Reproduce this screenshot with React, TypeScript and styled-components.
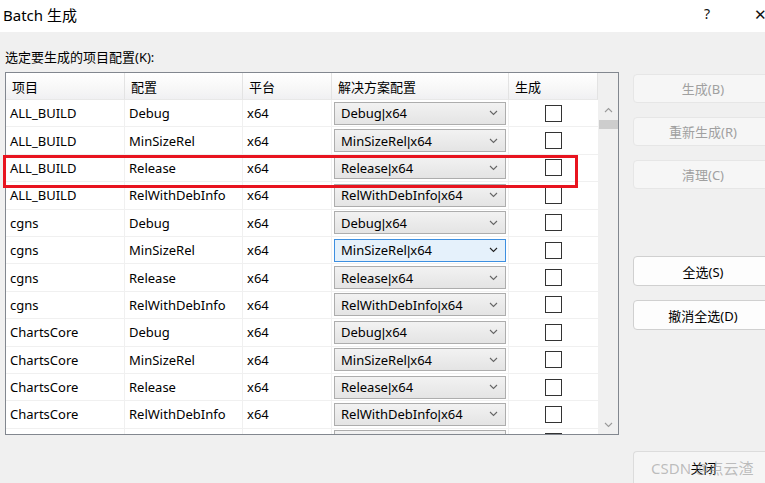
import { createGlobalStyle, styled } from 'styled-components'

type Row = { project: string; config: string; focused?: boolean }

const CONFIGS = ['Debug', 'MinSizeRel', 'Release', 'RelWithDebInfo']
const PROJECTS = ['ALL_BUILD', 'cgns', 'ChartsCore']

const ROWS: Row[] = PROJECTS.flatMap((project, p) =>
  CONFIGS.map((config) => ({
    project,
    config,
    focused: p === 1 && config === 'MinSizeRel',
  })),
)

const GlobalStyle = createGlobalStyle`
  *, *::before, *::after { box-sizing: border-box; }
  html, body {
    margin: 0;
    width: 765px;
    height: 483px;
    overflow: hidden;
    background: #f0f0f0;
    font-family: 'Noto Sans', 'Noto Sans CJK SC', sans-serif;
    color: #000;
  }
`

function Chevron({ up, color }: { up?: boolean; color: string }) {
  return (
    <svg width="9" height="6" viewBox="0 0 9 6">
      <path
        d={up ? 'M1 5 L4.5 1.5 L8 5' : 'M1 1 L4.5 4.5 L8 1'}
        fill="none"
        stroke={color}
        strokeWidth="1.1"
      />
    </svg>
  )
}

export default function App() {
  return (
    <>
      <GlobalStyle />
      <Window>
        <TitleBar>
          <TitleText>Batch 生成</TitleText>
          <TitleActions>
            <TitleButton>?</TitleButton>
            <TitleButton $close>✕</TitleButton>
          </TitleActions>
        </TitleBar>
        <Body>
          <LeftColumn>
            <PromptLabel>选定要生成的项目配置(K):</PromptLabel>
            <GridFrame>
              <HeaderRow>
                <HeaderCell>项目</HeaderCell>
                <HeaderCell>配置</HeaderCell>
                <HeaderCell>平台</HeaderCell>
                <HeaderCell>解决方案配置</HeaderCell>
                <HeaderCell>生成</HeaderCell>
                <HeaderFiller />
              </HeaderRow>
              <GridBody>
                <RowsViewport>
                  {ROWS.map((row, i) => (
                    <DataRow key={i}>
                      <Cell>{row.project}</Cell>
                      <Cell>{row.config}</Cell>
                      <Cell>x64</Cell>
                      <ComboCell>
                        <Combo $focused={!!row.focused}>
                          <span>
                            {row.config}
                            <Pipe>|</Pipe>x64
                          </span>
                          <Chevron color={row.focused ? '#222' : '#666'} />
                        </Combo>
                      </ComboCell>
                      <CheckCell>
                        <CheckBox />
                      </CheckCell>
                    </DataRow>
                  ))}
                  {/* next row, scrolled mostly out of view */}
                  <DataRow>
                    <Cell />
                    <Cell />
                    <Cell />
                    <ComboCell>
                      <Combo $focused={false} />
                    </ComboCell>
                    <CheckCell>
                      <CheckBox />
                    </CheckCell>
                  </DataRow>
                </RowsViewport>
                <ScrollBar>
                  <ScrollArrow>
                    <Chevron up color="#9a9a9a" />
                  </ScrollArrow>
                  <ScrollThumb />
                  <ScrollTrack />
                  <ScrollArrow>
                    <Chevron color="#9a9a9a" />
                  </ScrollArrow>
                </ScrollBar>
              </GridBody>
              <Annotation />
            </GridFrame>
          </LeftColumn>
          <ButtonColumn>
            <ActionButton disabled>生成(B)</ActionButton>
            <ActionButton disabled>重新生成(R)</ActionButton>
            <ActionButton disabled>清理(C)</ActionButton>
            <ButtonGap />
            <ActionButton>全选(S)</ActionButton>
            <ActionButton>撤消全选(D)</ActionButton>
          </ButtonColumn>
        </Body>
        <Footer>
          <CloseButton>
            关闭
            <Watermark>CSDN @点云渣</Watermark>
          </CloseButton>
        </Footer>
      </Window>
    </>
  )
}

const Window = styled.div`
  display: flex;
  flex-direction: column;
  width: 765px;
  height: 483px;
  background: #f0f0f0;
`

const TitleBar = styled.div`
  display: flex;
  align-items: center;
  justify-content: space-between;
  height: 32px;
  padding-left: 3px;
  background: #fff;
`

const TitleText = styled.div`
  font-size: 15px;
  margin-top: -4px;
`

const TitleActions = styled.div`
  display: flex;
  align-items: center;
  height: 100%;
`

const TitleButton = styled.div<{ $close?: boolean }>`
  display: flex;
  align-items: center;
  justify-content: center;
  width: ${({ $close }) => ($close ? '30px' : '46px')};
  height: 100%;
  margin-top: -5px;
  margin-right: ${({ $close }) => ($close ? '-10px' : '15px')};
  font-size: ${({ $close }) => ($close ? '15px' : '14px')};
  font-weight: ${({ $close }) => ($close ? 300 : 400)};
  color: #111;
`

const Body = styled.div`
  display: grid;
  grid-template-columns: 614px 140px;
  column-gap: 14px;
  padding: 0 0 0 5px;
`

const LeftColumn = styled.div`
  display: flex;
  flex-direction: column;
`

const PromptLabel = styled.div`
  height: 40px;
  padding-top: 14px;
  font-size: 13px;
  line-height: 22px;
`

const COLUMNS = '119px 118px 89px 177px 89px'

const GridFrame = styled.div`
  position: relative;
  width: 614px;
  height: 363px;
  border: 1px solid #82878f;
  background: #fff;
`

const HeaderRow = styled.div`
  display: grid;
  grid-template-columns: ${COLUMNS} 1fr;
  height: 27px;
`

const HeaderCell = styled.div`
  display: flex;
  align-items: center;
  padding-left: 6px;
  font-size: 13px;
  background: linear-gradient(#ffffff, #f7f7f7 60%, #f0f0f2);
  border-right: 1px solid #e3e3e3;
  border-bottom: 1px solid #e8e8e8;
`

const HeaderFiller = styled.div`
  background: #f0f0f0;
`

const GridBody = styled.div`
  display: flex;
  height: 334px;
`

const RowsViewport = styled.div`
  width: 592px;
  overflow: hidden;
`

const DataRow = styled.div`
  display: grid;
  grid-template-columns: ${COLUMNS};
  height: 27.4px;
  border-bottom: 1px solid #f0f0f0;
`

const Cell = styled.div`
  display: flex;
  align-items: center;
  padding-left: 4px;
  font-size: 13px;
  white-space: nowrap;
  border-right: 1px solid #f0f0f0;
`

const ComboCell = styled.div`
  display: flex;
  align-items: center;
  padding: 0 2px;
  border-right: 1px solid #f0f0f0;
`

const Combo = styled.div<{ $focused: boolean }>`
  display: flex;
  align-items: center;
  justify-content: space-between;
  width: 100%;
  height: 23px;
  padding: 0 7px 0 6px;
  font-size: 13px;
  white-space: nowrap;
  border: 1px solid ${({ $focused }) => ($focused ? '#3d8fe0' : '#adadad')};
  background: ${({ $focused }) =>
    $focused ? '#e5f1fb' : 'linear-gradient(#f2f2f2, #e4e4e4)'};
`

const Pipe = styled.span`
  font-family: 'Liberation Sans', sans-serif;
`

const CheckCell = styled.div`
  display: flex;
  align-items: center;
  justify-content: center;
`

const CheckBox = styled.div`
  width: 17px;
  height: 17px;
  border: 1px solid #333;
  background: #fff;
`

const ScrollBar = styled.div`
  display: flex;
  flex-direction: column;
  width: 20px;
  background: #f0f0f0;
`

const ScrollArrow = styled.div`
  display: flex;
  align-items: center;
  justify-content: center;
  height: 19px;
`

const ScrollThumb = styled.div`
  height: 9px;
  margin: 1px 0 0 1px;
  background: #cdcdcd;
`

const ScrollTrack = styled.div`
  flex: 1;
`

const Annotation = styled.div`
  position: absolute;
  left: -3px;
  top: 82px;
  width: 575px;
  height: 33px;
  border: 3px solid #e8141f;
  pointer-events: none;
`

const ButtonColumn = styled.div`
  display: flex;
  flex-direction: column;
  gap: 14px;
  padding-top: 42px;
`

const ButtonGap = styled.div`
  height: 39px;
`

const ActionButton = styled.button`
  height: ${({ disabled }) => (disabled ? '29px' : '30px')};
  margin: 0;
  border: 1px solid ${({ disabled }) => (disabled ? '#e6e6e6' : '#d0d0d0')};
  border-radius: 4px;
  background: ${({ disabled }) => (disabled ? '#f6f6f6' : '#fdfdfd')};
  color: ${({ disabled }) => (disabled ? '#a0a0a0' : '#000')};
  font: inherit;
  font-size: 13px;
  padding: 0;
`

const Footer = styled.div`
  display: flex;
  justify-content: flex-end;
  margin-top: auto;
`

const CloseButton = styled.div`
  position: relative;
  display: flex;
  align-items: center;
  justify-content: center;
  width: 132px;
  height: 32px;
  padding-left: 8px;
  border: 1px solid #dcdcdc;
  border-right: none;
  border-bottom: none;
  border-radius: 4px 0 0 0;
  background: #f5f5f5;
  font-size: 13px;
  color: #000;
`

const Watermark = styled.span`
  position: absolute;
  left: 17px;
  top: 5px;
  font-size: 15px;
  color: rgba(150, 150, 150, 0.6);
  white-space: nowrap;
  pointer-events: none;
`
